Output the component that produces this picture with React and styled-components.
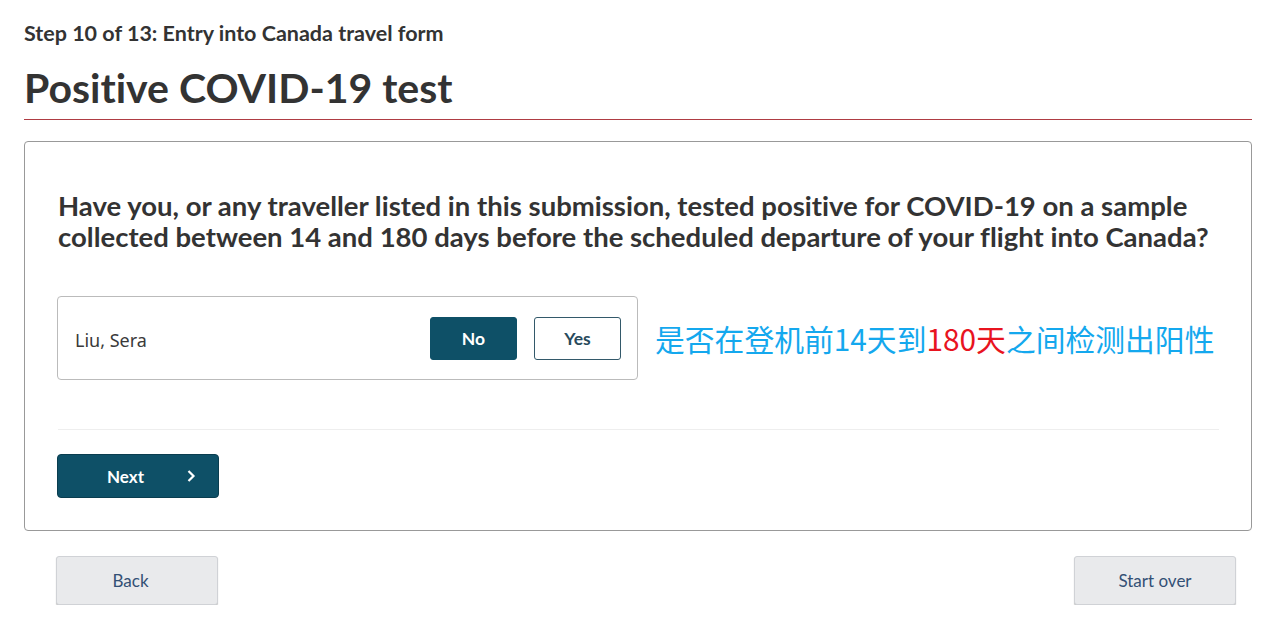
import React from "react";
import styled, { createGlobalStyle } from "styled-components";

const Global = createGlobalStyle`
  html, body { margin: 0; padding: 0; background: #fff; }
  body {
    font-family: Lato, "Noto Sans", sans-serif;
    color: #333;
    font-variant-ligatures: none;
  }
`;

const Page = styled.main`
  width: 1228px;
  padding: 20px 0 0 24px;
`;

const Step = styled.div`
  font-family: Lato, sans-serif;
  font-weight: 700;
  font-size: 21.5px;
  line-height: 26px;
  color: #333;
`;

const Title = styled.h1`
  margin: 18px 0 0;
  font-family: Lato, sans-serif;
  font-weight: 700;
  font-size: 41px;
  line-height: 48px;
  color: #333;
  padding-bottom: 7px;
  border-bottom: 1px solid #af3c43;
`;

const Card = styled.section`
  margin-top: 21px;
  border: 1px solid #999;
  border-radius: 4px;
  padding: 48px 32px 32px 33px;
`;

const Question = styled.h2`
  margin: 0;
  font-family: Lato, sans-serif;
  font-weight: 700;
  font-size: 27.5px;
  line-height: 31px;
  color: #333;
`;

const AnswerLine = styled.div`
  display: flex;
  align-items: center;
  gap: 17px;
  margin-top: 44px;
`;

const Traveller = styled.div`
  box-sizing: border-box;
  width: 581px;
  height: 84px;
  margin-left: -1px;
  border: 1px solid #bbb;
  border-radius: 4px;
  display: flex;
  align-items: center;
  padding: 0 16px 0 17px;
`;

const Name = styled.span`
  flex: 1;
  font-family: "Noto Sans", sans-serif;
  font-size: 18px;
  color: #3a3a3a;
  padding-top: 4px;
`;

const Choice = styled.button`
  box-sizing: border-box;
  width: 87px;
  height: 43px;
  margin-left: ${(p) => (p.$first ? "0" : "17px")};
  border-radius: 3px;
  border: 1px solid ${(p) => (p.$active ? "#0e5067" : "#33596a")};
  background: ${(p) => (p.$active ? "#0e5067" : "#fff")};
  color: ${(p) => (p.$active ? "#fff" : "#284a5c")};
  font-family: Lato, sans-serif;
  font-weight: 700;
  font-size: 17.5px;
  cursor: pointer;
`;

const Note = styled.div`
  font-family: "Noto Sans CJK SC", sans-serif;
  font-size: 29.8px;
  color: #14a8ee;
  white-space: nowrap;
`;

const Red = styled.span`
  color: #e8141f;
`;

const Divider = styled.hr`
  margin: 49px 0 24px;
  border: 0;
  border-top: 1px solid #eee;
`;

const NextButton = styled.button`
  box-sizing: border-box;
  width: 162px;
  height: 44px;
  margin-left: -1px;
  border-radius: 4px;
  border: 1px solid #0a3d4f;
  background: #0e5067;
  color: #fff;
  font-family: Lato, sans-serif;
  font-weight: 700;
  font-size: 17px;
  display: flex;
  align-items: center;
  justify-content: space-between;
  padding: 0 22px 0 49px;
  cursor: pointer;
`;

const Footer = styled.nav`
  display: flex;
  justify-content: space-between;
  padding: 25px 16px 0 32px;
`;

const PlainButton = styled.button`
  box-sizing: border-box;
  width: 162px;
  height: 49px;
  padding: 0 ${(p) => (p.$offset ? "13px" : "0")} 0 0;
  border: 1px solid #d0d2d6;
  border-radius: 3px;
  background: #e9eaec;
  box-shadow: 0 1px 1px rgba(0, 0, 0, 0.25);
  color: #335075;
  font-family: Lato, sans-serif;
  font-size: 17px;
  cursor: pointer;
`;

export default function App() {
  return (
    <>
      <Global />
      <Page>
        <Step>Step 10 of 13: Entry into Canada travel form</Step>
        <Title>Positive COVID-19 test</Title>
        <Card>
          <Question>
            Have you, or any traveller listed in this submission, tested positive for COVID-19 on a sample
            collected between 14 and 180 days before the scheduled departure of your flight into Canada?
          </Question>
          <AnswerLine>
            <Traveller>
              <Name>Liu, Sera</Name>
              <Choice $first $active>No</Choice>
              <Choice>Yes</Choice>
            </Traveller>
            <Note>
              是否在登机前14天到<Red>180天</Red>之间检测出阳性
            </Note>
          </AnswerLine>
          <Divider />
          <NextButton>
            <span>Next</span>
            <svg width="10" height="14" viewBox="0 0 10 14" aria-hidden="true">
              <path d="M2.5 2 L7.5 7 L2.5 12" fill="none" stroke="#fff" strokeWidth="2.2" />
            </svg>
          </NextButton>
        </Card>
        <Footer>
          <PlainButton $offset>Back</PlainButton>
          <PlainButton>Start over</PlainButton>
        </Footer>
      </Page>
    </>
  );
}
